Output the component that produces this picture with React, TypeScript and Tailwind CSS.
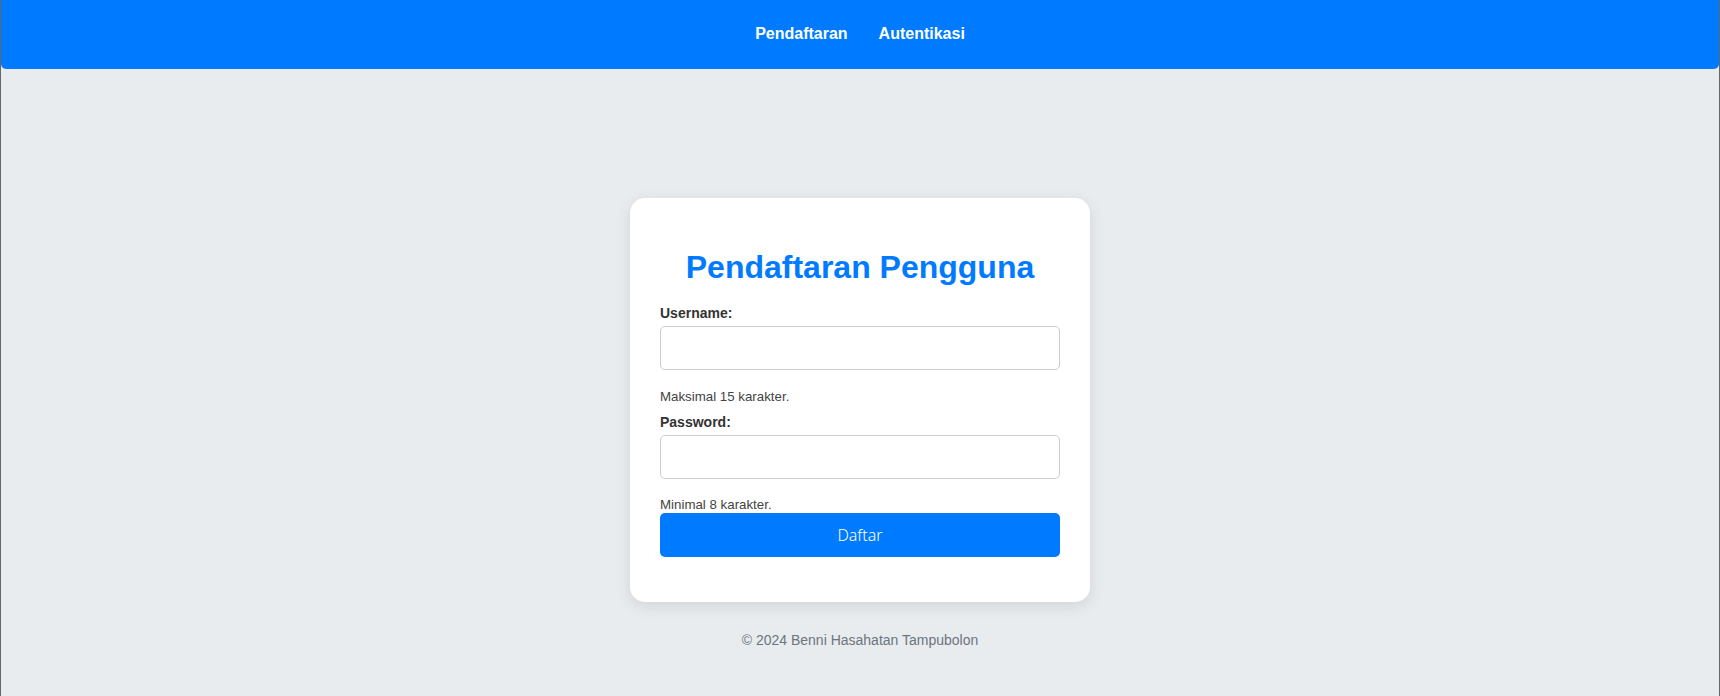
const fieldClass =
  'block h-[44px] w-full rounded-[5px] border border-[#ccc] bg-white px-[10px] text-[14px] outline-none';

const App = () => {
  return (
    <div className="min-h-screen border-x border-[#666] bg-[#e9ecef] font-['Liberation_Sans',Arial,sans-serif] text-[#333]">
      <header className="flex h-[69px] items-center justify-center gap-[31px] rounded-b-[5px] bg-[#007bff] pb-[1px]">
        <a href="#" className="text-[16px] font-bold text-white">
          Pendaftaran
        </a>
        <a href="#" className="text-[16px] font-bold text-white">
          Autentikasi
        </a>
      </header>

      <main className="flex flex-col items-center pt-[129px]">
        <div className="w-[460px] rounded-[15px] bg-white px-[30px] pt-[51px] pb-[45px] shadow-[0_4px_15px_rgba(0,0,0,0.1)]">
          <h2 className="text-center text-[32px] leading-[37px] font-bold text-[#007bff]">
            Pendaftaran Pengguna
          </h2>

          <form className="mt-[19px]">
            <label className="block text-[14px] leading-[16px] font-bold text-[#333]">
              Username:
            </label>
            <input type="text" className={`${fieldClass} mt-[5px]`} />
            <p className="mt-[19px] text-[13.3px] leading-[15px] text-[#444]">
              Maksimal 15 karakter.
            </p>

            <label className="mt-[10px] block text-[14px] leading-[16px] font-bold text-[#333]">
              Password:
            </label>
            <input type="password" className={`${fieldClass} mt-[5px]`} />
            <p className="mt-[18px] text-[13.3px] leading-[15px] text-[#444]">
              Minimal 8 karakter.
            </p>

            <button
              type="button"
              className="mt-[1px] h-[44px] w-full rounded-[5px] bg-[#007bff] font-['Noto_Sans',sans-serif] text-[16px] font-light text-white"
            >
              Daftar
            </button>
          </form>
        </div>

        <footer className="mt-[30px] text-center text-[14px] leading-[16px] text-[#6c757d]">
          © 2024 Benni Hasahatan Tampubolon
        </footer>
      </main>
    </div>
  );
};

export default App;
